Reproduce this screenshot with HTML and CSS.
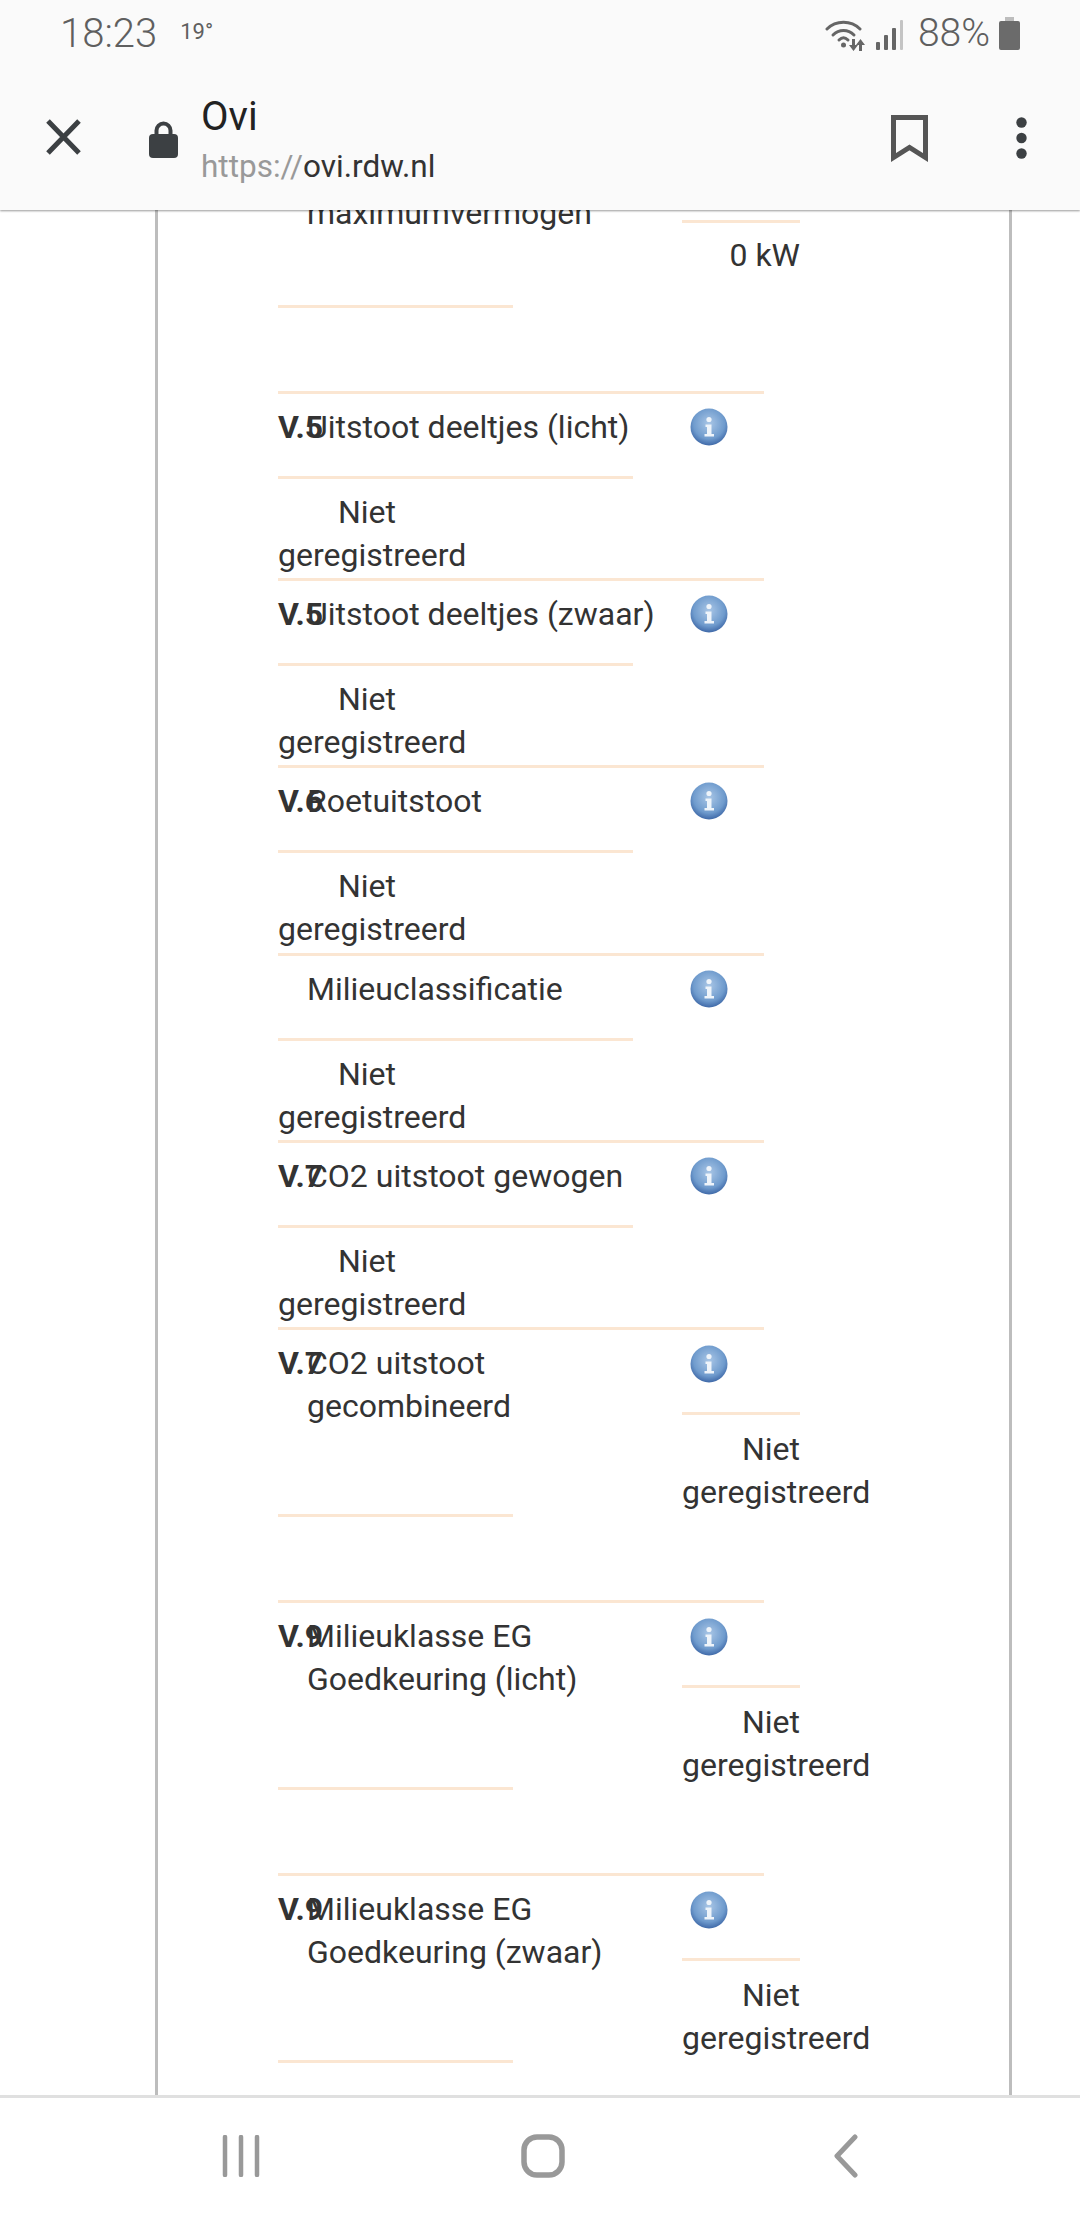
FILE: index.html
```html
<!DOCTYPE html>
<html lang="en">
<head>
  <meta charset="UTF-8">
  <title>Ovi</title>
  <link rel="stylesheet" href="styles.css">
</head>
<body>

<svg class="defs" width="0" height="0">
  <defs>
    <radialGradient id="info-fill" cx="50%" cy="40%" r="60%">
      <stop offset="0" stop-color="#a9c6e6"/>
      <stop offset="0.7" stop-color="#6f9bcd"/>
      <stop offset="1" stop-color="#3f69a8"/>
    </radialGradient>
    <symbol id="info" viewBox="0 0 38 38">
      <circle cx="19" cy="19" r="18.5" fill="url(#info-fill)"/>
      <circle cx="19" cy="11.5" r="2.6" fill="#eef4fa"/>
      <path d="M15.5 16.5h6v9.5h2.5v2.5H14.5V26h2.5v-7h-1.500z" fill="#eef4fa"/>
    </symbol>
  </defs>
</svg>

<header class="top">
  <div class="status">
    <span class="time">18:23</span>
    <span class="temp">19°</span>
    <div class="status-right">
      <svg class="wifi" width="42" height="32" viewBox="0 0 42 32">
        <g fill="none" stroke="#666" stroke-width="3" stroke-linecap="round">
          <path d="M2 9C11 0 26 0 35 9"/>
          <path d="M8 15C14 9 23 9 29 15"/>
          <path d="M14 20C17 17 20 17 23 20"/>
        </g>
        <circle cx="18.500" cy="25" r="2.500" fill="#666"/>
        <path d="M27 19h3v6h3l-4.500 6-4.500-6h3zM37 31h-3v-6h-3l4.500-6 4.500 6h-3z" fill="#666"/>
      </svg>
      <svg class="signal" width="27" height="30" viewBox="0 0 27 30">
        <rect x="0" y="22" width="4" height="8" rx="1" fill="#666"/>
        <rect x="8" y="15" width="4" height="15" rx="1" fill="#666"/>
        <rect x="16" y="8" width="4" height="22" rx="1" fill="#666"/>
        <rect x="24" y="0" width="3" height="30" rx="1" fill="#c4c4c4"/>
      </svg>
      <span class="battery-text">88%</span>
      <svg class="battery" width="21" height="33" viewBox="0 0 21 33">
        <path d="M6 0h9v4h4a2 2 0 0 1 2 2v25a2 2 0 0 1-2 2H2a2 2 0 0 1-2-2V6a2 2 0 0 1 2-2h4z" fill="#6b6b6b"/>
        <path d="M6 0h9v4H6z" fill="#bdbdbd"/>
      </svg>
    </div>
  </div>

  <div class="toolbar">
    <svg class="close" width="37" height="36" viewBox="0 0 37 36">
      <path d="M3 2l31 32M34 2L3 34" fill="none" stroke="#3c4043" stroke-width="5"/>
    </svg>
    <svg class="lock" width="29" height="37" viewBox="0 0 29 37">
      <path d="M7.500 15V9.500a7 7 0 0 1 14 0V15" fill="none" stroke="#3c4043" stroke-width="4"/>
      <rect x="0" y="13" width="29" height="24" rx="4" fill="#3c4043"/>
    </svg>
    <div class="page-info">
      <div class="page-title">Ovi</div>
      <div class="page-url"><span class="scheme">https://</span>ovi.rdw.nl</div>
    </div>
    <svg class="bookmark" width="37" height="47" viewBox="0 0 37 47">
      <path d="M2.500 2.500h32v40l-16-10-16 10z" fill="none" stroke="#555" stroke-width="5"/>
    </svg>
    <svg class="dots" width="11" height="42" viewBox="0 0 11 42">
      <circle cx="5.500" cy="5.500" r="5.200" fill="#3c4043"/>
      <circle cx="5.500" cy="21" r="5.200" fill="#3c4043"/>
      <circle cx="5.500" cy="36.500" r="5.200" fill="#3c4043"/>
    </svg>
  </div>
</header>

<main class="page">
  <div class="frame">

    <section class="row wide first">
      <div class="label-cell"><span class="label">maximumvermogen</span></div>
      <div class="value">0 kW</div>
      <div class="line-short"></div>
    </section>

    <section class="row narrow">
      <div class="head">
        <b class="code">V.5</b><span class="label">Uitstoot deeltjes (licht)</span>
        <svg class="info"><use href="#info"/></svg>
      </div>
      <div class="line-mid"></div>
      <div class="value">Niet geregistreerd</div>
    </section>

    <section class="row narrow">
      <div class="head">
        <b class="code">V.5</b><span class="label">Uitstoot deeltjes (zwaar)</span>
        <svg class="info"><use href="#info"/></svg>
      </div>
      <div class="line-mid"></div>
      <div class="value">Niet geregistreerd</div>
    </section>

    <section class="row narrow">
      <div class="head">
        <b class="code">V.6</b><span class="label">Roetuitstoot</span>
        <svg class="info"><use href="#info"/></svg>
      </div>
      <div class="line-mid"></div>
      <div class="value">Niet geregistreerd</div>
    </section>

    <section class="row narrow">
      <div class="head">
        <b class="code"></b><span class="label">Milieuclassificatie</span>
        <svg class="info"><use href="#info"/></svg>
      </div>
      <div class="line-mid"></div>
      <div class="value">Niet geregistreerd</div>
    </section>

    <section class="row narrow">
      <div class="head">
        <b class="code">V.7</b><span class="label">CO2 uitstoot gewogen</span>
        <svg class="info"><use href="#info"/></svg>
      </div>
      <div class="line-mid"></div>
      <div class="value">Niet geregistreerd</div>
    </section>

    <section class="row wide">
      <div class="label-cell">
        <b class="code">V.7</b><span class="label">CO2 uitstoot<br>gecombineerd</span>
      </div>
      <div class="value-cell">
        <svg class="info"><use href="#info"/></svg>
        <div class="value">Niet geregistreerd</div>
      </div>
      <div class="line-short"></div>
    </section>

    <section class="row wide">
      <div class="label-cell">
        <b class="code">V.9</b><span class="label">Milieuklasse EG<br>Goedkeuring (licht)</span>
      </div>
      <div class="value-cell">
        <svg class="info"><use href="#info"/></svg>
        <div class="value">Niet geregistreerd</div>
      </div>
      <div class="line-short"></div>
    </section>

    <section class="row wide">
      <div class="label-cell">
        <b class="code">V.9</b><span class="label">Milieuklasse EG<br>Goedkeuring (zwaar)</span>
      </div>
      <div class="value-cell">
        <svg class="info"><use href="#info"/></svg>
        <div class="value">Niet geregistreerd</div>
      </div>
      <div class="line-short"></div>
    </section>

  </div>
</main>

<nav class="navbar">
  <svg width="38" height="42" viewBox="0 0 38 42">
    <path d="M3 2v38M19 2v38M35 2v38" fill="none" stroke="#999" stroke-width="4.500" stroke-linecap="round"/>
  </svg>
  <svg class="nav-home" width="44" height="44" viewBox="0 0 44 44">
    <rect x="3" y="3" width="38" height="38" rx="13" fill="none" stroke="#999" stroke-width="5.500"/>
  </svg>
  <svg width="24" height="44" viewBox="0 0 24 44">
    <path d="M21 3L3 22l18 19" fill="none" stroke="#999" stroke-width="5" stroke-linecap="round" stroke-linejoin="round"/>
  </svg>
</nav>

</body>
</html>
```

FILE: styles.css
```css
html, body {
  margin: 0;
  padding: 0;
}

body {
  width: 1080px;
  height: 2220px;
  display: flex;
  flex-direction: column;
  overflow: hidden;
  background-color: #fff;
  color: #333;
  font-family: "Roboto", "Liberation Sans", sans-serif;
}

.defs {
  position: absolute;
}

/* browser chrome */
.top {
  flex: none;
  height: 210px;
  background-color: #fafafa;
  box-shadow: 0 1px 2px rgba(0, 0, 0, 0.4);
  position: relative;
  z-index: 2;
}

.status {
  height: 66px;
  padding: 0 60px;
  display: flex;
  align-items: center;
  color: #5f5f5f;
}

.time {
  font-size: 40px;
  font-weight: 300;
}

.temp {
  font-size: 22px;
  margin-left: 23px;
  margin-bottom: 4px;
}

.status-right {
  margin-left: auto;
  display: flex;
  align-items: center;
}

.wifi {
  margin-top: 6px;
}

.signal {
  margin-left: 9px;
  margin-top: 4px;
}

.battery-text {
  font-size: 39px;
  font-weight: 300;
  margin-left: 15px;
}

.battery {
  margin-left: 9px;
}

.toolbar {
  height: 144px;
  padding: 0 53px 0 45px;
  display: flex;
  align-items: center;
}

.close {
  margin-top: -3px;
}

.lock {
  margin-left: 67px;
  margin-bottom: -2px;
}

.page-info {
  margin-left: 23px;
  margin-top: 7px;
}

.page-title {
  font-size: 40px;
  color: #222;
  line-height: 46px;
}

.page-url {
  font-size: 31.5px;
  line-height: 44px;
  margin-top: 5px;
}

.scheme {
  color: #999;
}

.bookmark {
  margin-left: auto;
}

.dots {
  margin-left: 88px;
}

/* page below the toolbar */
.page {
  flex: 1;
  min-height: 0;
  overflow: hidden;
}

.frame {
  width: 857px;
  height: 100%;
  margin-left: 155px;
  padding-left: 120px;
  box-sizing: border-box;
  border-left: 3px solid #bdbdbd;
  border-right: 3px solid #bdbdbd;
  font-size: 32px;
  line-height: 43px;
}

.row {
  width: 486px;
  border-top: 3px solid #fbe6d2;
}

.code {
  display: inline-block;
  width: 29px;
  white-space: nowrap;
  font-weight: 700;
  vertical-align: top;
}

.label {
  display: inline-block;
  vertical-align: top;
  white-space: nowrap;
}

.info {
  width: 38px;
  height: 38px;
  display: block;
  filter: blur(0.6px);
}

.value {
  width: 118px;
  text-align: right;
}

/* label above value */
.narrow {
  height: 184.200px;
}

.head {
  padding-top: 12px;
  height: 70px;
  position: relative;
}

.narrow .info {
  position: absolute;
  left: 412px;
  top: 14px;
}

.line-mid {
  width: 355px;
  height: 3px;
  background-color: #fbe6d2;
}

.narrow .value {
  padding-top: 12px;
}

/* label beside value */
.wide {
  height: 270px;
  display: grid;
  grid-template-columns: 404px 82px;
  align-content: start;
}

.label-cell {
  padding-top: 12px;
  white-space: nowrap;
}

.value-cell {
  padding-top: 15px;
}

.value-cell .info {
  margin-left: 8px;
}

.value-cell .value {
  margin-top: 29px;
  padding-top: 13px;
  border-top: 3px solid #fbe6d2;
}

.line-short {
  grid-column: 1 / 3;
  width: 235px;
  height: 3px;
  background-color: #fbe6d2;
}

.first {
  height: auto;
  padding-bottom: 83px;
  border-top: 0;
}

.first .label-cell {
  padding-top: 0;
  margin-top: -18px;
  margin-left: 29px;
}

.first > .value {
  margin-top: 10px;
  padding-top: 11px;
  border-top: 3px solid #fbe6d2;
}

.first .line-short {
  margin-top: 28px;
}

/* android buttons */
.navbar {
  flex: none;
  height: 125px;
  box-sizing: border-box;
  background-color: #fff;
  border-top: 3px solid #e0e0e0;
  position: relative;
  z-index: 2;
  display: flex;
  align-items: center;
  padding: 0 0 6px 222px;
}

.nav-home {
  margin: 0 269px 0 261px;
}
```
